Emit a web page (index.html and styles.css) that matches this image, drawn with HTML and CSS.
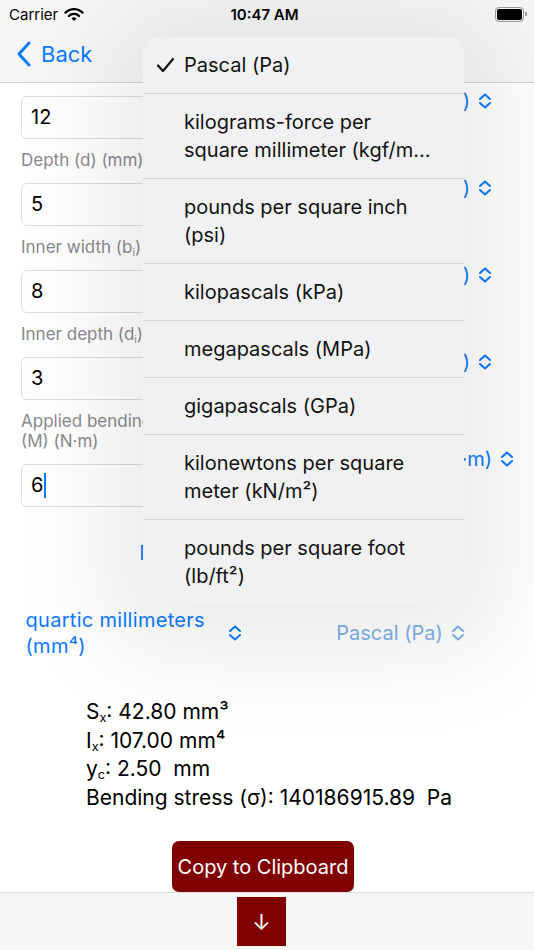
FILE: index.html
```html
<!DOCTYPE html>
<html lang="en">
<head>
    <meta charset="UTF-8">
    <meta name="viewport" content="width=device-width, initial-scale=1.0">
    <title>Bending Stress</title>
    <link rel="stylesheet" href="styles.css">
</head>
<body>
<div class="screen">
    <header class="topbar">
        <div class="status">
            <span class="carrier">Carrier
                <svg class="wifi" width="20" height="15" viewBox="0 0 20 15">
                    <path d="M1.5 5.6a12 12 0 0 1 17 0" fill="none" stroke="#000" stroke-width="2.3" stroke-linecap="round"/>
                    <path d="M4.9 9a7.2 7.2 0 0 1 10.2 0" fill="none" stroke="#000" stroke-width="2.3" stroke-linecap="round"/>
                    <path d="M10 14 L7.5 11.5a3.6 3.6 0 0 1 5 0z" fill="#000"/>
                </svg>
            </span>
            <span class="clock">10:47 AM</span>
            <span class="battery"><span class="battery-level"></span></span>
        </div>
        <nav class="navbar">
            <a class="back">
                <svg width="16" height="26" viewBox="0 0 16 26">
                    <path d="M13 2 L3 13 L13 24" fill="none" stroke="#0a7aff" stroke-width="3" stroke-linecap="round" stroke-linejoin="round"/>
                </svg>
                Back
            </a>
        </nav>
    </header>

    <main class="content">
        <div class="scroller">
            <!-- Input rows -->
            <div class="row">
                <div class="field-col">
                    <span class="label">Width (b) (mm)</span>
                    <div class="input">12</div>
                </div>
                <button class="picker">millimeters (mm) <svg class="updown" width="14" height="16" viewBox="0 0 14 16"><path d="M2 6 L7 1.5 L12 6 M2 10 L7 14.5 L12 10" fill="none" stroke="currentColor" stroke-width="2" stroke-linecap="round" stroke-linejoin="round"/></svg></button>
            </div>
            <div class="row">
                <div class="field-col">
                    <span class="label">Depth (d) (mm)</span>
                    <div class="input">5</div>
                </div>
                <button class="picker">millimeters (mm) <svg class="updown" width="14" height="16" viewBox="0 0 14 16"><path d="M2 6 L7 1.5 L12 6 M2 10 L7 14.5 L12 10" fill="none" stroke="currentColor" stroke-width="2" stroke-linecap="round" stroke-linejoin="round"/></svg></button>
            </div>
            <div class="row">
                <div class="field-col">
                    <span class="label">Inner width (b<sub>i</sub>)</span>
                    <div class="input">8</div>
                </div>
                <button class="picker">millimeters (mm) <svg class="updown" width="14" height="16" viewBox="0 0 14 16"><path d="M2 6 L7 1.5 L12 6 M2 10 L7 14.5 L12 10" fill="none" stroke="currentColor" stroke-width="2" stroke-linecap="round" stroke-linejoin="round"/></svg></button>
            </div>
            <div class="row">
                <div class="field-col">
                    <span class="label">Inner depth (d<sub>i</sub>)</span>
                    <div class="input">3</div>
                </div>
                <button class="picker">millimeters (mm) <svg class="updown" width="14" height="16" viewBox="0 0 14 16"><path d="M2 6 L7 1.5 L12 6 M2 10 L7 14.5 L12 10" fill="none" stroke="currentColor" stroke-width="2" stroke-linecap="round" stroke-linejoin="round"/></svg></button>
            </div>
            <div class="row row-wide">
                <div class="field-col">
                    <span class="label">Applied bending moment (M) (N·m)</span>
                    <div class="input">6<span class="caret"></span></div>
                </div>
                <button class="picker">newton meters (N·m) <svg class="updown" width="14" height="16" viewBox="0 0 14 16"><path d="M2 6 L7 1.5 L12 6 M2 10 L7 14.5 L12 10" fill="none" stroke="currentColor" stroke-width="2" stroke-linecap="round" stroke-linejoin="round"/></svg></button>
            </div>

            <div class="section-row">
                <button class="picker">Hollow rectangle section <svg class="updown" width="14" height="16" viewBox="0 0 14 16"><path d="M2 6 L7 1.5 L12 6 M2 10 L7 14.5 L12 10" fill="none" stroke="currentColor" stroke-width="2" stroke-linecap="round" stroke-linejoin="round"/></svg></button>
            </div>

            <!-- Output units -->
            <div class="output-row">
                <button class="picker"><span class="picker-wrap">quartic millimeters (mm⁴)</span> <svg class="updown" width="14" height="16" viewBox="0 0 14 16"><path d="M2 6 L7 1.5 L12 6 M2 10 L7 14.5 L12 10" fill="none" stroke="currentColor" stroke-width="2" stroke-linecap="round" stroke-linejoin="round"/></svg></button>
                <button class="picker picker-dim">Pascal (Pa) <svg class="updown" width="14" height="16" viewBox="0 0 14 16"><path d="M2 6 L7 1.5 L12 6 M2 10 L7 14.5 L12 10" fill="none" stroke="currentColor" stroke-width="2" stroke-linecap="round" stroke-linejoin="round"/></svg></button>
            </div>

            <!-- Results -->
            <div class="results">
                <div class="results-text">
                    <div>S<sub>x</sub>: 42.80 mm³</div>
                    <div>I<sub>x</sub>: 107.00 mm⁴</div>
                    <div>y<sub>c</sub>: 2.50&nbsp; mm</div>
                    <div>Bending stress (σ): 140186915.89&nbsp; Pa</div>
                </div>
            </div>

            <button class="copy-btn">Copy to Clipboard</button>
        </div>
    </main>

    <footer class="toolbar">
        <button class="down-btn">↓</button>
    </footer>

    <!-- Unit menu (open) -->
    <ul class="menu">
        <li class="selected">
            <svg class="check" width="19" height="16" viewBox="0 0 19 16"><path d="M2 8.5 L7 14 L17 2" fill="none" stroke="#111" stroke-width="2.2" stroke-linecap="round" stroke-linejoin="round"/></svg>
            Pascal (Pa)
        </li>
        <li>
            <span class="menu-line">kilograms-force per</span>
            <span class="menu-line truncate">square millimeter (kgf/mm²)</span>
        </li>
        <li>pounds per square inch (psi)</li>
        <li>kilopascals (kPa)</li>
        <li>megapascals (MPa)</li>
        <li>gigapascals (GPa)</li>
        <li>kilonewtons per square meter (kN/m²)</li>
        <li>pounds per square foot (lb/ft²)</li>
    </ul>
</div>
</body>
</html>
```

FILE: styles.css
```css
body {
    margin: 0;
    font-family: Inter, "Noto Sans", sans-serif;
    background: #fff;
}
.screen {
    position: relative;
    width: 534px;
    height: 950px;
    display: flex;
    flex-direction: column;
    overflow: hidden;
}
.topbar {
    height: 82px;
    background-color: #f7f7f7;
    border-bottom: 1px solid #d6d6d6;
    flex-shrink: 0;
}
.status {
    height: 28px;
    display: flex;
    align-items: center;
    justify-content: space-between;
    padding: 0 9px;
    font-size: 15px;
}
.carrier {
    display: flex;
    align-items: center;
    gap: 6px;
    width: 120px;
}
.clock {
    font-weight: 600;
}
.battery {
    position: relative;
    width: 25px;
    height: 11px;
    border: 1px solid #9a9a9a;
    border-radius: 4px;
    padding: 1px;
    margin-right: 1px;
    margin-left: 95px;
}
.battery::after {
    content: "";
    position: absolute;
    right: -4px;
    top: 4px;
    width: 2px;
    height: 4px;
    background: #9a9a9a;
    border-radius: 0 1px 1px 0;
}
.battery-level {
    display: block;
    height: 100%;
    background: #000;
    border-radius: 2px;
}
.navbar {
    height: 54px;
    display: flex;
    align-items: center;
    padding-left: 16px;
    padding-bottom: 3px;
    box-sizing: border-box;
}
.back {
    display: flex;
    align-items: center;
    gap: 9px;
    color: #0a7aff;
    font-size: 22px;
}
.content {
    flex: 1;
    overflow: hidden;
}
.scroller {
    margin-top: -20px;
    display: flex;
    flex-direction: column;
}
.row {
    display: flex;
    align-items: center;
    justify-content: space-between;
    padding: 0 42px 0 21px;
    margin-bottom: 11px;
}
.row-wide {
    padding-right: 20px;
    margin-bottom: 0;
}
.field-col {
    width: 205px;
}
.label {
    display: block;
    font-size: 17px;
    line-height: 20px;
    color: #8a8a8e;
    margin-bottom: 13px;
}
.label sub, .results sub {
    font-size: 0.6em;
    vertical-align: -0.25em;
    line-height: 0;
}
.input {
    height: 43px;
    box-sizing: border-box;
    border: 1px solid #dcdcdc;
    border-radius: 6px;
    padding-left: 9px;
    font-size: 20px;
    line-height: 41px;
    color: #000;
    display: flex;
    align-items: center;
}
.caret {
    display: inline-block;
    width: 2px;
    height: 25px;
    background: #0a7aff;
    margin-left: 1px;
}
.picker {
    display: flex;
    align-items: center;
    gap: 8px;
    border: none;
    background: none;
    padding: 0;
    font-family: inherit;
    font-size: 20px;
    color: #0a7aff;
    text-align: left;
}
.updown {
    flex-shrink: 0;
}
.section-row {
    display: flex;
    justify-content: center;
    margin-top: 33px;
    height: 26px;
}
.output-row {
    display: grid;
    grid-template-columns: 1fr 1fr;
    align-items: center;
    margin-top: 41px;
}
.output-row .picker {
    justify-self: center;
    line-height: 26px;
}
.picker-wrap {
    width: 194px;
    letter-spacing: 0.3px;
}
.picker-dim {
    color: #7db1ec;
}
.results {
    display: flex;
    justify-content: center;
    margin-top: 39px;
}
.results-text {
    font-size: 21px;
    line-height: 28.5px;
    color: #000;
    padding-left: 4px;
}
.copy-btn {
    margin-top: 29px;
    width: 182px;
    height: 51px;
    margin-left: 172px;
    background-color: #800000;
    color: white;
    border: none;
    border-radius: 7px;
    font-family: inherit;
    font-size: 20px;
    padding: 0;
    align-self: flex-start;
}
.toolbar {
    height: 58px;
    box-sizing: border-box;
    flex-shrink: 0;
    background-color: #f6f6f6;
    border-top: 1px solid #dedede;
    padding: 4px 0 0 237px;
}
.down-btn {
    width: 49px;
    height: 49px;
    background-color: #800000;
    color: white;
    border: none;
    font-size: 22px;
    font-family: inherit;
    padding: 0;
}
.menu {
    position: absolute;
    left: 143px;
    top: 37px;
    width: 321px;
    margin: 0;
    padding: 0;
    list-style: none;
    background-color: #f1f1f3;
    border-radius: 14px;
    overflow: hidden;
    box-shadow: 0 10px 100px 40px rgba(0, 0, 0, 0.08);
}
.menu li {
    position: relative;
    padding: 14px 30px 14px 41px;
    font-size: 20px;
    line-height: 28px;
    color: #111;
    border-top: 1px solid #d6d6d8;
}
.menu li:first-child {
    border-top: none;
}
.check {
    position: absolute;
    left: 13px;
    top: 20px;
}
.menu-line {
    display: block;
}
.truncate {
    white-space: nowrap;
    overflow: hidden;
    text-overflow: ellipsis;
}
```
